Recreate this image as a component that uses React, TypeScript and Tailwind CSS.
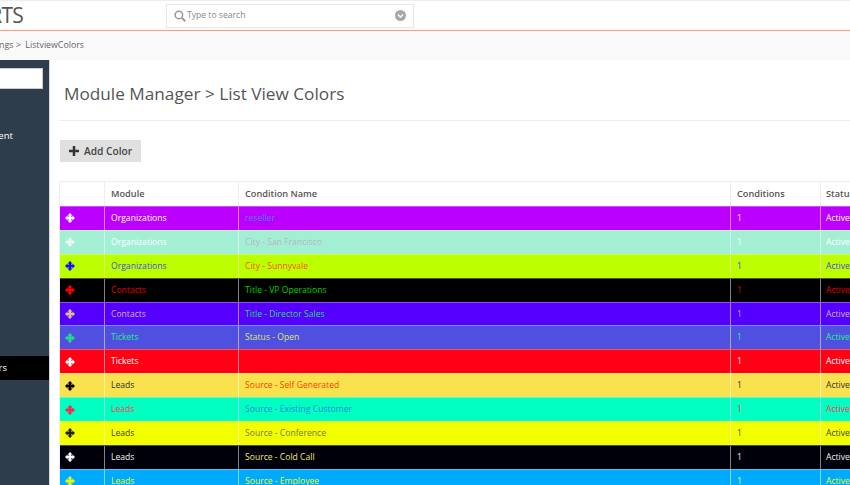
const rows = [
  { bg: "bg-[#bb00ff]", t: "text-[#ffffff]", i: "text-[#ffffff]", c: "text-[#4d7dff]", m: "Organizations", n: "reseller" },
  { bg: "bg-[#a3efd4]", t: "text-[#ffffff]", i: "text-[#eef5f2]", c: "text-[#b5b5c8]", m: "Organizations", n: "City - San Francisco" },
  { bg: "bg-[#bbff00]", t: "text-[#4a4ae0]", i: "text-[#1010ff]", c: "text-[#ff5500]", m: "Organizations", n: "City - Sunnyvale" },
  { bg: "bg-[#000000]", t: "text-[#e00000]", i: "text-[#ff0000]", c: "text-[#00d000]", m: "Contacts", n: "Title - VP Operations" },
  { bg: "bg-[#5500ff]", t: "text-[#d0b0d8]", i: "text-[#dcc090]", c: "text-[#22dd66]", m: "Contacts", n: "Title - Director Sales" },
  { bg: "bg-[#5050e0]", t: "text-[#22ee88]", i: "text-[#22dd88]", c: "text-[#d8e870]", m: "Tickets", n: "Status - Open" },
  { bg: "bg-[#ff0015]", t: "text-[#ffffff]", i: "text-[#ffffff]", c: "text-[#ff0015]", m: "Tickets", n: "" },
  { bg: "bg-[#fae14e]", t: "text-[#333333]", i: "text-[#000000]", c: "text-[#ff4400]", m: "Leads", n: "Source - Self Generated" },
  { bg: "bg-[#00ffc0]", t: "text-[#ff3366]", i: "text-[#ff2255]", c: "text-[#2288dd]", m: "Leads", n: "Source - Existing Customer" },
  { bg: "bg-[#f2ff00]", t: "text-[#444433]", i: "text-[#222222]", c: "text-[#777744]", m: "Leads", n: "Source - Conference" },
  { bg: "bg-[#00000a]", t: "text-[#f0f0f0]", i: "text-[#ffffff]", c: "text-[#f5e878]", m: "Leads", n: "Source - Cold Call" },
  { bg: "bg-[#00aaff]", t: "text-[#e8ff00]", i: "text-[#e8ff00]", c: "text-[#e8ff00]", m: "Leads", n: "Source - Employee" },
];

function MoveIcon() {
  return (
    <svg viewBox="0 0 16 16" className="w-[10px] h-[10px] fill-current">
      <path d="M8 0 L12 4 L10 4 L10 6 L12 6 L12 4 L16 8 L12 12 L12 10 L10 10 L10 12 L12 12 L8 16 L4 12 L6 12 L6 10 L4 10 L4 12 L0 8 L4 4 L4 6 L6 6 L6 4 L4 4 Z" />
    </svg>
  );
}

const cols = "grid grid-cols-[45px_134px_492px_90px_120px]";
const cell = "flex items-center pl-[6px] border-r overflow-hidden whitespace-nowrap";
const last = "flex items-center pl-[5px] border-r overflow-hidden whitespace-nowrap";

export default function App() {
  return (
    <div className="w-[850px] h-[485px] overflow-hidden bg-white font-['Open_Sans',sans-serif] text-[#555555]">
      <div className="w-[1400px] -ml-[181px]">
        <header className="h-[31px] flex items-center border-t border-b border-t-[#eeeeee] border-b-[#ff9f80] bg-white">
          <div className="w-[347px] flex justify-end pr-[143px]">
            <span className="text-[21px] tracking-[-0.8px] text-[#555555] leading-none">EXPERTS</span>
          </div>
          <div className="w-[248px] h-[24px] flex items-center border border-[#e8e8e8] px-[7px] gap-[1px]">
            <svg viewBox="0 0 16 16" className="w-[12px] h-[12px] text-[#999999] fill-none stroke-current stroke-[2]">
              <circle cx="6.5" cy="6.5" r="5" />
              <path d="M10.5 10.5 L15 15" strokeWidth="2.6" />
            </svg>
            <span className="text-[8.6px] text-[#888888] flex-1">Type to search</span>
            <svg viewBox="0 0 16 16" className="w-[11px] h-[11px]">
              <circle cx="8" cy="8" r="8" fill="#a8a8a8" />
              <path d="M4.2 6.5 L8 10.2 L11.8 6.5" fill="none" stroke="#ffffff" strokeWidth="2" />
            </svg>
          </div>
        </header>
        <nav className="h-[29px] bg-[#f9f9f9] text-[8.8px] text-[#666666]">
          <div className="w-[265px] h-full flex items-center justify-end">
            <span className="whitespace-nowrap">Settings &gt;&nbsp; ListviewColors</span>
          </div>
        </nav>
        <div className="flex h-[425px]">
          <aside className="w-[231px] shrink-0 bg-[#2d3d4c] border-r border-[#d8d8d8] flex flex-col text-[#ffffff] text-[9.6px]">
            <div className="mt-[8px] ml-[10px] mr-[6px] h-[21px] bg-white border border-[#ccc] shrink-0" />
            <div className="mt-[37px] w-[194px] flex justify-end leading-[20px] whitespace-nowrap">Assignment</div>
            <div className="mt-[210px] h-[24px] bg-black flex items-center justify-end pr-[42px] whitespace-nowrap">Colors</div>
          </aside>
          <main className="flex-1 pl-[9px]">
            <h1 className="ml-[5px] pt-[23px] h-[60px] text-[17.2px] leading-[22px] text-[#555555]">Module Manager &gt; List View Colors</h1>
            <div className="border-t border-[#eeeeee] mt-0" />
            <button className="mt-[19px] ml-[1px] w-[81px] h-[22px] bg-[#e0e0e0] flex items-center pl-[9px] gap-[5px] text-[10.2px] font-semibold text-[#444444]">
              <svg viewBox="0 0 12 12" className="w-[10px] h-[10px] fill-[#333333]">
                <path d="M4.5 0 H7.5 V4.5 H12 V7.5 H7.5 V12 H4.5 V7.5 H0 V4.5 H4.5 Z" />
              </svg>
              <span className="pt-[1px]">Add Color</span>
            </button>
            <div className="mt-[19px] border-l border-[#eeeeee] text-[8.6px]">
              <div className={`${cols} h-[25px] border-t border-[#eeeeee] font-semibold text-[9.2px] text-[#555555]`}>
                <div className={`${cell} border-[#eeeeee]`} />
                <div className={`${cell} border-[#eeeeee]`}>Module</div>
                <div className={`${cell} border-[#eeeeee]`}>Condition Name</div>
                <div className={`${cell} border-[#eeeeee]`}>Conditions</div>
                <div className={`${last} border-[#eeeeee]`}>Status</div>
              </div>
              {rows.map((r, i) => (
                <div key={i} className={`${cols} h-[23.9px] border-t border-white/30 ${r.bg} ${r.t}`}>
                  <div className={`flex items-center pl-[5px] border-r border-white/50 ${r.i}`}><MoveIcon /></div>
                  <div className={`${cell} border-white/50`}>{r.m}</div>
                  <div className={`${cell} border-white/50 ${r.c}`}>{r.n}</div>
                  <div className={`${cell} border-white/50`}>1</div>
                  <div className={`${last} border-white/50`}>Active</div>
                </div>
              ))}
            </div>
          </main>
        </div>
      </div>
    </div>
  );
}
